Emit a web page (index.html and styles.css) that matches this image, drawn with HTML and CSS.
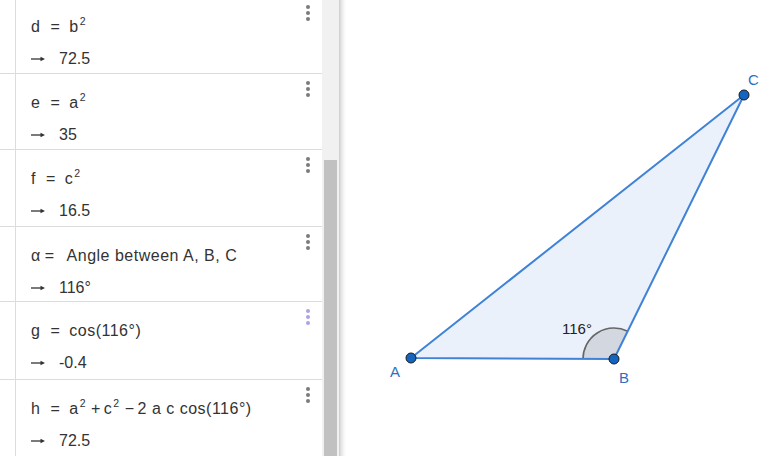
FILE: index.html
```html
<!DOCTYPE html>
<html lang="en">
<head>
    <meta charset="UTF-8">
    <meta name="viewport" content="width=device-width, initial-scale=1.0">
    <title>Triangle - Algebra</title>
    <link rel="stylesheet" href="styles.css">
</head>
<body>
    <div class="app">
        <div class="algebra">
            <div class="list">
                <div class="row">
                    <div class="marble"></div>
                    <div class="item">
                        <div class="def">d<span class="eq">=</span>b<span class="sup">2</span></div>
                        <div class="val"><svg class="arrow" width="14" height="8" viewBox="0 0 14 8"><path d="M0 4H11" stroke="#333" stroke-width="1.3"/><path d="M9.5 1.8L14 4L9.5 6.2Z" fill="#333"/></svg>72.5</div>
                    </div>
                    <div class="menu"><i></i><i></i><i></i></div>
                </div>
                <div class="row">
                    <div class="marble"></div>
                    <div class="item">
                        <div class="def">e<span class="eq">=</span>a<span class="sup">2</span></div>
                        <div class="val"><svg class="arrow" width="14" height="8" viewBox="0 0 14 8"><path d="M0 4H11" stroke="#333" stroke-width="1.3"/><path d="M9.5 1.8L14 4L9.5 6.2Z" fill="#333"/></svg>35</div>
                    </div>
                    <div class="menu"><i></i><i></i><i></i></div>
                </div>
                <div class="row row-77">
                    <div class="marble"></div>
                    <div class="item">
                        <div class="def">f<span class="eq">=</span>c<span class="sup">2</span></div>
                        <div class="val"><svg class="arrow" width="14" height="8" viewBox="0 0 14 8"><path d="M0 4H11" stroke="#333" stroke-width="1.3"/><path d="M9.5 1.8L14 4L9.5 6.2Z" fill="#333"/></svg>16.5</div>
                    </div>
                    <div class="menu"><i></i><i></i><i></i></div>
                </div>
                <div class="row row-75">
                    <div class="marble"></div>
                    <div class="item">
                        <div class="def">α<span class="eq eq-tight">=</span>Angle between A, B, C</div>
                        <div class="val"><svg class="arrow" width="14" height="8" viewBox="0 0 14 8"><path d="M0 4H11" stroke="#333" stroke-width="1.3"/><path d="M9.5 1.8L14 4L9.5 6.2Z" fill="#333"/></svg>116°</div>
                    </div>
                    <div class="menu"><i></i><i></i><i></i></div>
                </div>
                <div class="row row-78">
                    <div class="marble"></div>
                    <div class="item">
                        <div class="def">g<span class="eq">=</span>cos(116°)</div>
                        <div class="val"><svg class="arrow" width="14" height="8" viewBox="0 0 14 8"><path d="M0 4H11" stroke="#333" stroke-width="1.3"/><path d="M9.5 1.8L14 4L9.5 6.2Z" fill="#333"/></svg>-0.4</div>
                    </div>
                    <div class="menu hover"><i></i><i></i><i></i></div>
                </div>
                <div class="row row-78">
                    <div class="marble"></div>
                    <div class="item">
                        <div class="def">h<span class="eq">=</span>a<span class="sup">2</span><span class="op">+</span>c<span class="sup">2</span><span class="op">−</span>2 a c cos(116°)</div>
                        <div class="val"><svg class="arrow" width="14" height="8" viewBox="0 0 14 8"><path d="M0 4H11" stroke="#333" stroke-width="1.3"/><path d="M9.5 1.8L14 4L9.5 6.2Z" fill="#333"/></svg>72.5</div>
                    </div>
                    <div class="menu"><i></i><i></i><i></i></div>
                </div>
            </div>
        </div>
        <div class="scroll"><div class="thumb"></div></div>
        <div class="divider"></div>
        <div class="canvas">
            <svg viewBox="346 0 425 456" width="425" height="456">
                <polygon points="411,358 614,359 744,95" fill="#e8eff9" fill-opacity="0.85"/>
                <path d="M614 359L583 359A31 31 0 0 1 627.6 331.2Z" fill="#d3d7df"/>
                <path d="M583 359A31 31 0 0 1 627.6 331.2" fill="none" stroke="#666" stroke-width="1.6"/>
                <polygon points="411,358 614,359 744,95" fill="none" stroke="#3f82d6" stroke-width="2" stroke-linejoin="round"/>
                <text class="angle-label" x="562" y="334">116°</text>
                <circle cx="411" cy="358" r="5" fill="#1565c0" stroke="#1a1a1a" stroke-width="1"/>
                <circle cx="614" cy="359" r="5" fill="#1565c0" stroke="#1a1a1a" stroke-width="1"/>
                <circle cx="744" cy="95" r="5" fill="#1565c0" stroke="#1a1a1a" stroke-width="1"/>
                <text class="pt-label" x="390" y="377">A</text>
                <text class="pt-label" x="619" y="383">B</text>
                <text class="pt-label" x="748" y="85">C</text>
            </svg>
        </div>
    </div>
</body>
</html>
```
FILE: styles.css
```css
body {
    margin: 0;
    font-family: "Liberation Sans", Arial, sans-serif;
    background-color: #fff;
    color: #333;
}
.app {
    display: flex;
    width: 771px;
    height: 456px;
    overflow: hidden;
}
.algebra {
    width: 322px;
    flex: none;
    overflow: hidden;
    background-color: #fff;
}
.list {
    margin-top: -2px;
}
.row {
    display: flex;
    height: 76px;
    box-sizing: border-box;
    border-bottom: 1px solid #dcdcdc;
}
.row-75 {
    height: 75px;
}
.row-77 {
    height: 77px;
}
.row-78 {
    height: 78px;
}
.marble {
    width: 15px;
    flex: none;
    border-right: 1px solid #dcdcdc;
}
.item {
    flex: 1;
    padding: 19px 0 0 15px;
    font-size: 16px;
    white-space: nowrap;
}
.def, .val {
    line-height: 20px;
    height: 20px;
}
.def {
    letter-spacing: 0.5px;
}
.val {
    margin-top: 12px;
}
.eq {
    margin: 0 9px 0 10px;
}
.eq-tight {
    margin: 0 12px 0 4px;
}
.op {
    margin: 0 3px 0 5px;
}
.sup {
    font-size: 10.5px;
    line-height: 0;
    vertical-align: 7px;
    margin-left: 1px;
}
.arrow {
    vertical-align: 1px;
    margin-right: 14px;
}
.menu {
    width: 28px;
    flex: none;
    display: flex;
    flex-direction: column;
    align-items: center;
    gap: 2px;
    padding-top: 7px;
}
.menu i {
    display: block;
    width: 4px;
    height: 4px;
    border-radius: 50%;
    background-color: #7b7b7b;
}
.menu.hover i {
    background-color: #aaa3e6;
}
.scroll {
    width: 17px;
    flex: none;
    box-sizing: border-box;
    padding: 160px 2px 0 2px;
    background-color: #f1f1f1;
    display: flex;
    flex-direction: column;
}
.thumb {
    flex: 1;
    background-color: #c1c1c1;
}
.divider {
    width: 7px;
    flex: none;
    background: linear-gradient(to right, #cdcdcd, #e6e6e6 35%, #f6f6f6 70%, #fff);
}
.canvas {
    flex: 1;
    background-color: #fff;
}
.canvas svg {
    display: block;
}
.pt-label {
    font-family: "Liberation Sans", Arial, sans-serif;
    font-size: 15px;
    fill: #2f6fc4;
}
.angle-label {
    font-family: "Liberation Sans", Arial, sans-serif;
    font-size: 15px;
    fill: #222;
}
```
